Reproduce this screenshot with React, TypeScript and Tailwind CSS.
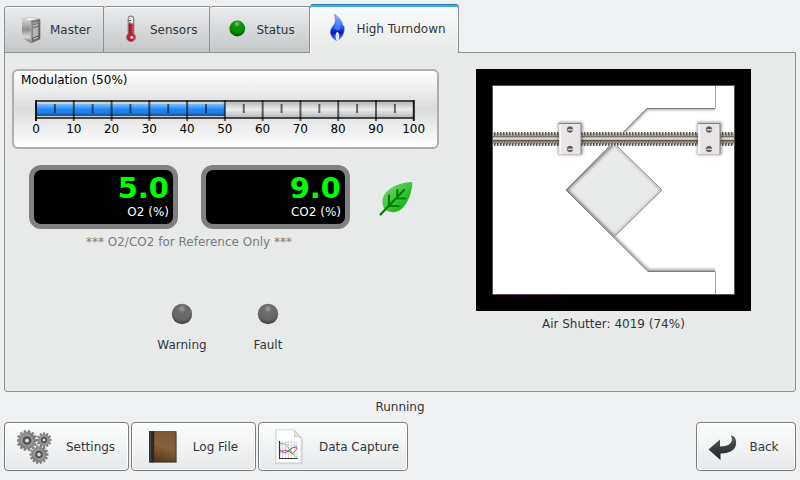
import { useState, type ReactNode } from "react";

// outline of a gear with square-ish teeth
function gearPath(cx: number, cy: number, r: number, teeth: number) {
  const points: string[] = [];
  const step = (Math.PI * 2) / teeth;
  for (let i = 0; i < teeth; i++) {
    const a = i * step;
    [
      [a - step * 0.3, r - 2],
      [a - step * 0.2, r],
      [a + step * 0.2, r],
      [a + step * 0.3, r - 2],
    ].forEach(([angle, radius]) => {
      points.push(`${(cx + Math.cos(angle) * radius).toFixed(2)},${(cy + Math.sin(angle) * radius).toFixed(2)}`);
    });
  }
  return `M${points.join("L")}Z`;
}

function ServerIcon() {
  return (
    <svg className="size-8 shrink-0" viewBox="0 0 32 32" aria-hidden="true">
      <defs>
        <linearGradient id="serverSide" x1="0" y1="0" x2="0" y2="1">
          <stop offset="0" stopColor="#d8d8d8" />
          <stop offset="0.45" stopColor="#8f8f8f" />
          <stop offset="0.75" stopColor="#dcdcdc" />
          <stop offset="1" stopColor="#5a5a5a" />
        </linearGradient>
        <linearGradient id="serverFront" x1="0" y1="0" x2="1" y2="1">
          <stop offset="0" stopColor="#8a8a8a" />
          <stop offset="1" stopColor="#585858" />
        </linearGradient>
      </defs>
      <path d="M7 5L15 3.5L25 5L16 7Z" fill="#f1f1f1" stroke="#aaa" strokeWidth="0.5" />
      <path d="M7 5L16 7V29L7 24Z" fill="url(#serverSide)" />
      <path d="M16 7L25 5.5V25L16 29Z" fill="url(#serverFront)" stroke="#666" strokeWidth="0.6" />
      <path d="M17.8 9L23.2 8V21.5L17.8 23.5Z" fill="#b5b5b5" />
      <path d="M18 10.5L23 9.5M18 13.5L23 12.5" stroke="#666" strokeWidth="1" />
      <path d="M19 25L23 23.5" stroke="#ddd" />
      <path d="M16 7.500V28.500" stroke="#ddd" strokeWidth="0.7" />
    </svg>
  );
}

function ThermometerIcon() {
  return (
    <svg className="size-8 shrink-0" viewBox="0 0 32 32" aria-hidden="true">
      <path
        d="M13.2 4.2Q13.2 2 16 2T18.8 4.200V19.800A4.400 4.400 0 1 1 13.200 19.800Z"
        fill="#c81e2b"
        stroke="#777"
        strokeWidth="1"
      />
      <path d="M13.800 4.200Q13.800 2.500 16 2.500T18.200 4.200V9.500H13.800Z" fill="#cceef5" />
      <path d="M14 6.500H16M14 9H16M14 11.500H16M14 14H16M14 16.500H16M14 19H16" stroke="#5b1118" strokeWidth="0.8" />
      <path d="M17.3 10V19" stroke="#e5535c" strokeWidth="0.8" />
      <circle cx="16.8" cy="23.4" r="1.6" fill="#f7c7ca" />
    </svg>
  );
}

function GreenLedIcon() {
  return (
    <svg className="size-8 shrink-0" viewBox="0 0 32 32" aria-hidden="true">
      <defs>
        <radialGradient id="greenLed" cx="0.48" cy="0.2" r="0.8">
          <stop offset="0" stopColor="#7fce7f" />
          <stop offset="0.25" stopColor="#139413" />
          <stop offset="0.65" stopColor="#009000" />
          <stop offset="1" stopColor="#004d00" />
        </radialGradient>
      </defs>
      <circle cx="16.3" cy="14.5" r="7.9" fill="url(#greenLed)" />
    </svg>
  );
}

function FlameIcon() {
  return (
    <svg className="size-8 shrink-0" viewBox="0 0 32 32" aria-hidden="true">
      <defs>
        <linearGradient id="flame" x1="0" y1="0" x2="0" y2="1">
          <stop offset="0" stopColor="#a9c2f8" />
          <stop offset="0.4" stopColor="#3a74f0" />
          <stop offset="0.7" stopColor="#0713c0" />
          <stop offset="1" stopColor="#5a8af5" />
        </linearGradient>
      </defs>
      <path
        d="M13.5 1.500C17 3.500 21 7.500 21.500 12C22.200 13 22.700 12.500 23 13.500C23.700 18 22.500 23 18 26.500C19 23 18 20 16.300 19C14.500 20.500 14 24 15.500 27.500C11.500 25.500 9 22 9.500 18C10 14.500 12.500 13.500 14 10C14.800 7.500 14.600 4.500 13.500 1.500Z"
        fill="url(#flame)"
        stroke="#3d6de8"
        strokeWidth="0.6"
      />
      <path d="M15.500 6C19 9.500 20.500 12 18.500 16.500C17.500 18 14 17 13.500 15C15.500 12 16.200 9.500 15.500 6Z" fill="#4c93ff" opacity="0.7" />
      <path d="M16.300 18.800C14.200 21 14.400 24.500 16 27.500C18.500 26 18.500 21 16.300 18.800Z" fill="#e6edff" />
    </svg>
  );
}

function GearsIcon() {
  const gears = [
    { cx: 10, cy: 11.5, r: 10.2, teeth: 14 },
    { cx: 27, cy: 11, r: 7.4, teeth: 12 },
    { cx: 22, cy: 25.5, r: 9.2, teeth: 14 },
  ];
  return (
    <svg className="-mx-px h-9 w-9 shrink-0" viewBox="0 0 36 36" aria-hidden="true">
      <defs>
        <linearGradient id="gear" x1="0" y1="0" x2="1" y2="1">
          <stop offset="0" stopColor="#a8a8a8" />
          <stop offset="0.5" stopColor="#787878" />
          <stop offset="1" stopColor="#969696" />
        </linearGradient>
      </defs>
      {gears.map((g) => (
        <g key={g.cx}>
          <path d={gearPath(g.cx, g.cy, g.r, g.teeth)} fill="url(#gear)" stroke="#666" strokeWidth="0.5" />
          <circle cx={g.cx} cy={g.cy} r={g.r * 0.55} fill="#858585" stroke="#a5a5a5" strokeWidth="1" />
          <circle cx={g.cx} cy={g.cy} r={g.r * 0.36} fill="#606060" stroke="#444" strokeWidth="0.8" />
          <circle cx={g.cx} cy={g.cy} r={g.r * 0.18} fill="#dedede" />
        </g>
      ))}
    </svg>
  );
}

function BookIcon() {
  return (
    <svg className="size-8 shrink-0" viewBox="0 0 32 32" aria-hidden="true">
      <defs>
        <linearGradient id="book" x1="0.7" y1="0" x2="0.4" y2="1">
          <stop offset="0" stopColor="#7d5836" />
          <stop offset="0.5" stopColor="#87613c" />
          <stop offset="1" stopColor="#5a3919" />
        </linearGradient>
      </defs>
      <rect x="3" y="1.5" width="27" height="30.5" fill="#000" opacity="0.3" />
      <rect x="2.500" y="0.500" width="26.500" height="30.500" fill="url(#book)" stroke="#3e2610" strokeWidth="0.6" />
      <rect x="2.200" y="0.300" width="5" height="31" fill="#292929" />
      <path d="M3.500 1V31" stroke="#484848" />
    </svg>
  );
}

function ChartFileIcon() {
  return (
    <svg className="h-9 w-8 shrink-0" viewBox="0 0 32 36" aria-hidden="true">
      <path d="M3 1.5H21L29 9.5V34.5H3Z" fill="#bbb" opacity="0.4" stroke="#aaa" strokeWidth="1.6" strokeLinejoin="round" />
      <path d="M3 0.8H20.8L28 8.5V33.8H3Z" fill="#fff" stroke="#d8dadc" strokeLinejoin="round" />
      <path d="M20.8 0.8Q22.5 5 21.3 8Q25 7 28 8.5Z" fill="#e4e5e6" stroke="#c3c5c7" strokeWidth="0.8" />
      <path
        d="M6.5 13H24M6.5 16H24M6.5 19H24M6.5 22H24M6.5 25H24M9.5 12.5V29M12.5 12.5V29M15.5 12.5V29M18.5 12.5V29M21.5 12.5V29M24 12.5V29"
        stroke="#ccc"
        strokeWidth="0.7"
      />
      <path d="M6.5 14.500C13 14 14 17 17 21C19 25 21 27 24 28" fill="none" stroke="#4be04b" />
      <path d="M6.5 20C9 24 12 24 15 22.500C18 20 19 18 24 18" fill="none" stroke="#4545e8" />
      <path d="M6.5 24C10 20.500 14 20.500 17 23C20 26 22 23 24 19" fill="none" stroke="#e04545" />
      <path d="M6.5 12V29.500H24.500" fill="none" stroke="#333" strokeWidth="1.200" />
    </svg>
  );
}

function BackIcon() {
  return (
    <svg className="size-8 shrink-0" viewBox="0 0 32 32" aria-hidden="true">
      <defs>
        <linearGradient id="back" x1="0" y1="0" x2="0" y2="1">
          <stop offset="0" stopColor="#5a5e60" />
          <stop offset="1" stopColor="#1c1f20" />
        </linearGradient>
      </defs>
      <path
        d="M24 4.500C26 4.500 28 6 28.700 8.500C31 17 25 22.500 13.500 22.500V29L1.500 18.500L13 8.500V15.500C22 15.500 27 12 24 4.500Z"
        fill="url(#back)"
      />
    </svg>
  );
}

function LeafIcon() {
  return (
    <svg className="h-9 w-9 shrink-0" viewBox="0 0 36 36" aria-hidden="true">
      <defs>
        <linearGradient id="leaf" x1="0" y1="0" x2="1" y2="1">
          <stop offset="0.2" stopColor="#65d265" />
          <stop offset="0.5" stopColor="#3fc43f" />
          <stop offset="0.8" stopColor="#12b312" />
        </linearGradient>
      </defs>
      <path
        d="M33 1Q34.500 1.200 34.300 3C34 11 30 22 24 27.500C18.500 32.500 11 32 6.500 28C2.500 21 4.500 14 10 9.500C16 4 25 1.500 33 1Z"
        fill="url(#leaf)"
      />
      <path
        d="M2.500 33.500L26 9M11 14.500V25H20.500M19.300 9V17.500H27"
        fill="none"
        stroke="#008000"
        strokeWidth="2.2"
        strokeLinecap="round"
        strokeLinejoin="round"
      />
    </svg>
  );
}

function IndicatorLed({ label }: { label: string }) {
  return (
    <div className="flex w-[86px] flex-col items-center gap-3">
      <svg className="size-[22px]" viewBox="0 0 22 22" aria-hidden="true">
        <defs>
          <radialGradient id="greyLed" cx="0.5" cy="0.25" r="0.8">
            <stop offset="0" stopColor="#a0a0a0" />
            <stop offset="0.25" stopColor="#6c6c6c" />
            <stop offset="0.65" stopColor="#666" />
            <stop offset="1" stopColor="#333" />
          </radialGradient>
        </defs>
        <circle cx="11" cy="11" r="10.2" fill="url(#greyLed)" />
      </svg>
      <span>{label}</span>
    </div>
  );
}

function Readout({ value, label }: { value: string; label: string }) {
  return (
    <div className="flex h-16 w-[149px] flex-col items-end rounded-[12px] border-[5px] border-[#808080] bg-black px-1 pt-1">
      <span className="text-[29px] leading-7 font-bold text-[#00ff00]">{value}</span>
      <span className="mt-[2px] text-white">{label}</span>
    </div>
  );
}

function ModulationGauge({ value }: { value: number }) {
  const majors = Array.from({ length: 11 }, (_, i) => i * 10);
  const minors = majors.slice(0, 10).map((m) => m + 5);
  return (
    <section className="h-20 rounded-md border-2 border-[#adafae] bg-linear-to-b from-white via-[#dadcdb] to-white px-[7px] pt-px text-black">
      <h2>Modulation ({value}%)</h2>
      <div className="pt-3 pr-4 pl-[15px]">
        <svg className="block h-[21px] w-full overflow-visible" role="img" aria-label={`Modulation ${value}%`}>
          <defs>
            <linearGradient id="gaugeFill" x1="0" y1="0" x2="0" y2="1">
              <stop offset="0" stopColor="#84bdf6" />
              <stop offset="0.45" stopColor="#1e87f5" />
              <stop offset="0.7" stopColor="#1e80e8" />
              <stop offset="1" stopColor="#1a4f88" />
            </linearGradient>
            <linearGradient id="gaugeTrack" x1="0" y1="0" x2="0" y2="1">
              <stop offset="0" stopColor="#b4b5b6" />
              <stop offset="0.5" stopColor="#eaebed" />
              <stop offset="1" stopColor="#b4b5b6" />
            </linearGradient>
          </defs>
          <rect y="1" width="100%" height="17" fill="url(#gaugeTrack)" />
          <rect y="2" width={`${value}%`} height="15" fill="#c9d4dc" />
          <rect y="4" width={`${value}%`} height="12" fill="url(#gaugeFill)" />
          <line x1="0" x2="100%" y1="1" y2="1" stroke="#454747" strokeWidth="2" />
          <line x1="0" x2="100%" y1="18" y2="18" stroke="#454747" strokeWidth="2" />
          {majors.map((m) => (
            <line key={m} x1={`${m}%`} x2={`${m}%`} y1="0" y2="21" stroke="#000" strokeOpacity={m % 100 ? 0.6 : 0.9} strokeWidth="2" />
          ))}
          {minors.map((m) => (
            <line key={m} x1={`${m}%`} x2={`${m}%`} y1="4" y2="13" stroke="#000" strokeOpacity="0.55" strokeWidth="2" />
          ))}
        </svg>
        <div className="flex justify-between">
          {majors.map((m) => (
            <span key={m} className="flex w-0 justify-center">
              {m}
            </span>
          ))}
        </div>
      </div>
    </section>
  );
}

function Bracket({ x }: { x: number }) {
  return (
    <g transform={`translate(${x} 54)`}>
      <rect x="-1" y="-1" width="25" height="33" rx="1" fill="#000" opacity="0.35" filter="url(#soft)" />
      <rect x="0.5" y="0.5" width="21.5" height="31" fill="#e8e4e8" />
      <path d="M1 31V1.5" stroke="#fff" strokeWidth="1.5" />
      <path d="M0 0.5H22V31" fill="none" stroke="#838383" />
      <path d="M0 31.5H22" stroke="#c4c4c4" />
      {[6.5, 26].map((y) => (
        <g key={y}>
          <circle cx="11" cy={y} r="2.8" fill="#5d5850" stroke="#57534d" strokeWidth="0.8" />
          <path d={`M8.500 ${y + 0.3}H14`} stroke="#d3cec2" strokeWidth="1.500" />
        </g>
      ))}
    </g>
  );
}

function ShutterDiagram() {
  return (
    <svg className="w-[275px] max-w-full" viewBox="0 0 275 242" role="img" aria-label="Air shutter position">
      <defs>
        <filter id="soft" x="-20%" y="-20%" width="140%" height="140%">
          <feGaussianBlur stdDeviation="1.7" />
        </filter>
        <clipPath id="housingClip">
          <path d="M239 39H171L90 121L172 202H239Z" />
        </clipPath>
        <clipPath id="bladeClip">
          <path d="M90 121L138 74L186 121L138 168Z" />
        </clipPath>
        <pattern id="thread" width="3" height="14" y="63" patternUnits="userSpaceOnUse">
          <rect y="1" width="3" height="12" fill="#b9b1a6" />
          <rect width="1.600" height="3.500" fill="#5b564f" />
          <rect x="1.600" width="1.400" height="1.500" fill="#eee" />
          <rect y="4" width="3" height="1.500" fill="#7a736a" />
          <rect y="5.500" width="3" height="2" fill="#ded5c8" />
          <rect y="8" width="3" height="1.500" fill="#5e5850" />
          <rect x="1" y="9.500" width="1.500" height="1.500" fill="#736c64" />
          <rect y="11" width="1.600" height="3" fill="#5b564f" />
          <rect x="1.600" y="12.500" width="1.400" height="1.500" fill="#eee" />
        </pattern>
      </defs>
      <rect width="275" height="242" fill="#000" />
      <rect x="16.500" y="16.500" width="242" height="209" fill="#fff" stroke="#555" />
      <path d="M20 225.500H87" stroke="#6b3360" strokeDasharray="2 1 1 2 3 1" />

      <g clipPath="url(#housingClip)">
        <path d="M242 39H171L90 121L172 202H242" fill="none" stroke="#333" strokeWidth="3" opacity="0.6" filter="url(#soft)" />
      </g>
      <path d="M90 121L138 74L186 121L138 168Z" fill="#e8eae9" />
      <g clipPath="url(#bladeClip)">
        <path d="M138 74L90 121L138 168" fill="none" stroke="#222" strokeWidth="3" opacity="0.6" filter="url(#soft)" />
        <path d="M138 74L186 121L138 168" fill="none" stroke="#444" strokeWidth="2" opacity="0.4" filter="url(#soft)" />
      </g>
      <path d="M138 74L186 121L138 168" fill="none" stroke="#929292" />
      <path d="M239.500 17V39.500M239.500 202.500V225" stroke="#a6a6a6" />
      <path d="M239 39.500H171L90 121L172 202.500H239" fill="none" stroke="#7d7d7d" />

      <rect x="17" y="63" width="241" height="14" fill="url(#thread)" />
      <Bracket x={83} />
      <Bracket x={222} />
    </svg>
  );
}

function ToolButton({ icon, label, className = "" }: { icon: ReactNode; label: string; className?: string }) {
  return (
    <button
      type="button"
      className={`flex h-[49px] items-center justify-center rounded-[4px] border border-[#7c7e80] bg-linear-to-b from-[#fcfdfd] to-[#e7e9eb] shadow-[inset_0_0_0_1px_#ffffff] ${className}`}
    >
      {icon}
      {label}
    </button>
  );
}

const tabs = [
  { label: "Master", icon: <ServerIcon /> },
  { label: "Sensors", icon: <ThermometerIcon /> },
  { label: "Status", icon: <GreenLedIcon /> },
  { label: "High Turndown", icon: <FlameIcon /> },
];

export default function App() {
  const [active, setActive] = useState("High Turndown");

  return (
    <div className="flex min-h-screen flex-col bg-[#eff0f1] px-1 pt-1 pb-[9px] font-['DejaVu_Sans',sans-serif] text-[12px] leading-4 text-[#31363b]">
      <div role="tablist" className="relative -mb-px flex items-end">
        {tabs.map((tab) => (
          <button
            key={tab.label}
            type="button"
            role="tab"
            aria-selected={tab.label === active}
            onClick={() => setActive(tab.label)}
            className={
              tab.label === active
                ? "flex h-[49px] items-center gap-[3px] rounded-t-[3px] border-t border-r border-t-[#2b7ba6] border-r-[#8e9091] bg-linear-to-b from-[#fafbfc] to-[#e8eae9] pr-3 pl-[11px] shadow-[inset_0_2px_0_#3daee9,inset_1px_0_0_#ffffff]"
                : "flex h-[47px] min-w-[100px] items-center gap-[3px] rounded-tl-[3px] border border-l-0 border-[#8e9091] bg-linear-to-b from-[#ebeced] to-[#c5c6c8] pr-3 pl-[11px] shadow-[inset_0_1px_0_#ffffff] first:border-l first:pl-[10px]"
            }
          >
            {tab.icon}
            {tab.label}
          </button>
        ))}
      </div>

      <main className="flex flex-1 rounded-b-[3px] border border-[#8e9091] bg-[#e8eae9] px-[7px] pt-4">
        <div className="w-[55%]">
          <ModulationGauge value={50} />

          <div className="mt-4 flex items-center pl-[17px]">
            <div className="flex gap-[23px]">
              <Readout value="5.0" label="O2 (%)" />
              <Readout value="9.0" label="CO2 (%)" />
            </div>
            <div className="ml-7 pt-1">
              <LeafIcon />
            </div>
          </div>
          <div className="flex w-[354px] flex-col items-center">
            <p className="mt-[5px] text-[#7a7c7d]">*** O2/CO2 for Reference Only ***</p>
          </div>

          <div className="mt-[53px] flex pl-[127px]">
            <IndicatorLed label="Warning" />
            <IndicatorLed label="Fault" />
          </div>
        </div>

        <figure className="flex flex-1 flex-col items-center gap-[5px]">
          <ShutterDiagram />
          <figcaption>Air Shutter: 4019 (74%)</figcaption>
        </figure>
      </main>

      <p role="status" className="py-[7px] text-center">
        Running
      </p>

      <div className="flex gap-[2px]">
        <ToolButton icon={<GearsIcon />} label="Settings" className="min-w-[125px] gap-[14px]" />
        <ToolButton icon={<BookIcon />} label="Log File" className="min-w-[125px] gap-[14px] pr-[2px]" />
        <ToolButton icon={<ChartFileIcon />} label="Data Capture" className="min-w-[150px] gap-[14px] pl-[6px]" />
        <ToolButton icon={<BackIcon />} label="Back" className="ml-auto min-w-[100px] gap-[10px] pr-[6px]" />
      </div>
    </div>
  );
}
